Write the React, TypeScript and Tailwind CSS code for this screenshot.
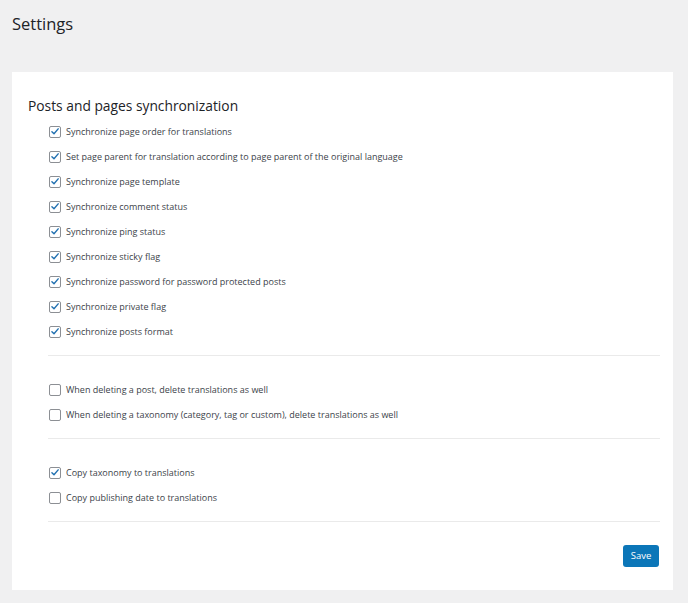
import { useState } from 'react';

const GROUPS: { label: string; checked: boolean }[][] = [
  [
    { label: 'Synchronize page order for translations', checked: true },
    { label: 'Set page parent for translation according to page parent of the original language', checked: true },
    { label: 'Synchronize page template', checked: true },
    { label: 'Synchronize comment status', checked: true },
    { label: 'Synchronize ping status', checked: true },
    { label: 'Synchronize sticky flag', checked: true },
    { label: 'Synchronize password for password protected posts', checked: true },
    { label: 'Synchronize private flag', checked: true },
    { label: 'Synchronize posts format', checked: true },
  ],
  [
    { label: 'When deleting a post, delete translations as well', checked: false },
    { label: 'When deleting a taxonomy (category, tag or custom), delete translations as well', checked: false },
  ],
  [
    { label: 'Copy taxonomy to translations', checked: true },
    { label: 'Copy publishing date to translations', checked: false },
  ],
];

function Checkbox({ label, initial }: { label: string; initial: boolean }) {
  const [checked, setChecked] = useState(initial);
  return (
    <label className="flex items-center h-[25px] pl-[1px] cursor-pointer">
      <button
        type="button"
        onClick={() => setChecked((c) => !c)}
        className="w-[12px] h-[12px] rounded-[2px] border border-[#8c8f94] bg-white flex items-center justify-center shrink-0"
      >
        {checked && (
          <svg viewBox="0 0 12 12" className="w-[11px] h-[11px]">
            <path d="M2.3 6.2 L4.8 8.7 L9.8 2.8" fill="none" stroke="#2271b1" strokeWidth="1.7" strokeLinecap="round" strokeLinejoin="round" />
          </svg>
        )}
      </button>
      <span className="ml-[5px] text-[9px] text-[#3c434a]">{label}</span>
    </label>
  );
}

export default function App() {
  return (
    <div className="min-h-[603px] bg-[#f0f0f1] px-[12px] pt-[12px] pb-[13px] font-['Open_Sans','Liberation_Sans',sans-serif]">
      <h1 className="text-[16.5px] leading-[24px] text-[#1d2327]">Settings</h1>
      <div className="mt-[36px] bg-white w-[661px] px-[16px] pt-[24px] pb-[23px]">
        <h2 className="text-[13.8px] leading-[20px] text-[#1d2327]">Posts and pages synchronization</h2>
        <div className="ml-[20px] mr-[-3px]">
          {GROUPS.map((group, gi) => (
            <div key={gi} className={`border-b border-[#eaeaea] ${gi === 0 ? 'pt-[3px] pb-[11px]' : 'pt-[21px] pb-[11px]'}`}>
              {group.map((item) => (
                <Checkbox key={item.label} label={item.label} initial={item.checked} />
              ))}
            </div>
          ))}
          <div className="flex justify-end pt-[23px] pr-[1px]">
            <button className="h-[22px] w-[36px] rounded-[3px] bg-[#0b76b8] text-white text-[9.5px]">Save</button>
          </div>
        </div>
      </div>
    </div>
  );
}
